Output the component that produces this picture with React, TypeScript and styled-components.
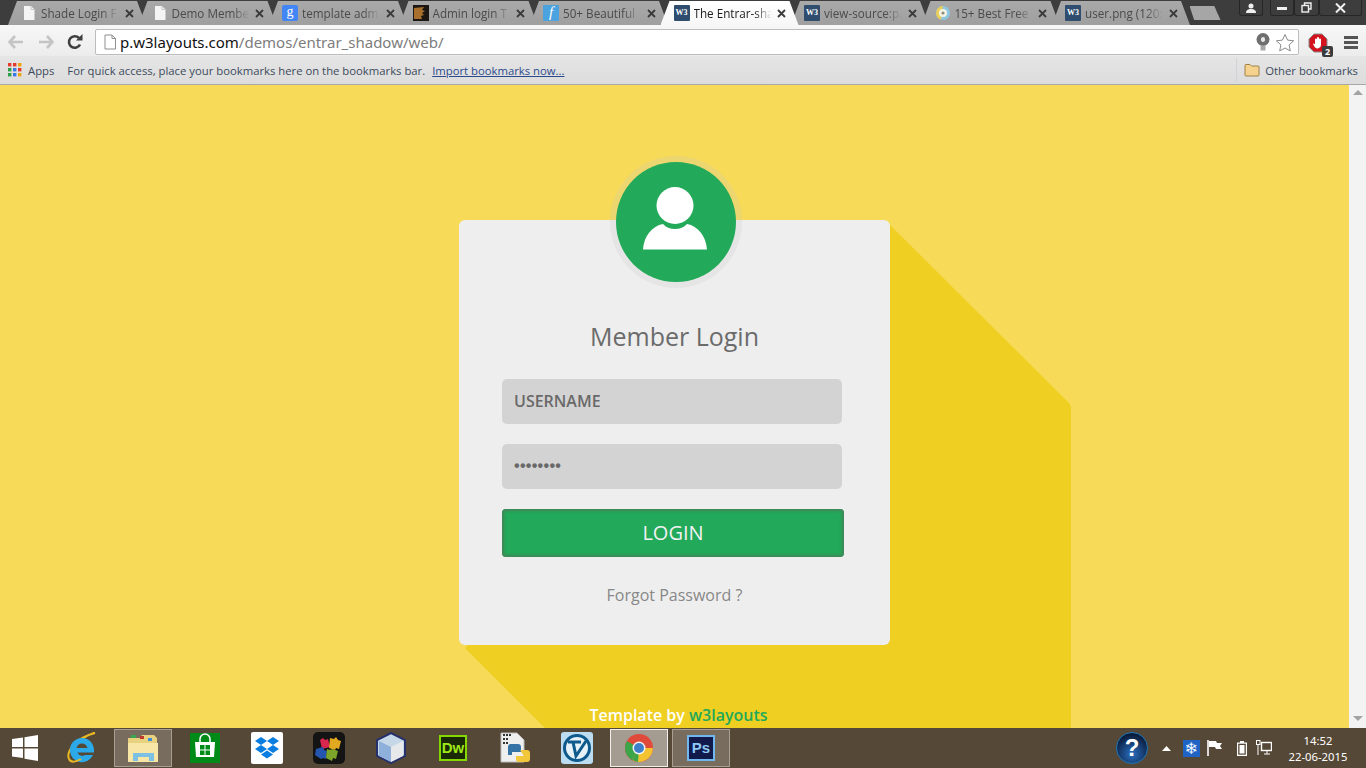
import React from "react";
import styled, { createGlobalStyle } from "styled-components";

const GlobalStyle = createGlobalStyle`
  html, body { margin: 0; padding: 0; overflow: hidden; }
  * { box-sizing: border-box; }
  body { font-family: "Open Sans", "Noto Sans", sans-serif; }
`;

const Screen = styled.div`
  width: 1366px;
  height: 768px;
  display: flex;
  flex-direction: column;
  overflow: hidden;
`;

/* chrome: tabs */
const TabStrip = styled.div`
  height: 25px;
  flex: none;
  background: #3d3d3d;
  display: flex;
  padding: 1px 4px 0 8px;
  position: relative;
`;

const Tab = styled.div<{ $active?: boolean }>`
  width: 138px;
  height: 24px;
  margin-right: -7.5px;
  flex: none;
  padding: 0 0 0 13px;
  display: flex;
  align-items: center;
  clip-path: polygon(9px 0, calc(100% - 9px) 0, 100% 100%, 0 100%);
  background: ${(p) => (p.$active ? "linear-gradient(#ffffff, #f7f7f7)" : "linear-gradient(#a9a9a9, #9f9f9f)")};
  position: relative;
  z-index: ${(p) => (p.$active ? 2 : 1)};
`;

const TabFavicon = styled.span`
  width: 16px;
  height: 16px;
  flex: none;
  display: flex;
  align-items: center;
  justify-content: center;
  overflow: hidden;
`;

const TabTitle = styled.span<{ $active?: boolean }>`
  width: 78px;
  margin-left: 4px;
  font-size: 11.7px;
  line-height: 16px;
  white-space: nowrap;
  color: ${(p) => (p.$active ? "#1c1c1c" : "#4a4a4a")};
  mask-image: linear-gradient(to right, #000 78%, transparent);
`;

const TabClose = styled.span`
  margin-left: 4px;
  width: 12px;
  display: flex;
  justify-content: center;
  color: #3a3a3a;
`;

const NewTab = styled.div`
  width: 31px;
  height: 14px;
  margin: 5px 0 0 7px;
  flex: none;
  background: #a6a6a6;
  clip-path: polygon(0 0, 80% 0, 100% 100%, 15% 100%);
`;

const WindowButtons = styled.div`
  margin-left: auto;
  display: flex;
  height: 16px;
  margin-top: -1px;
  color: #f0f0f0;
`;

const WinButton = styled.div<{ $w: number; $gap?: number }>`
  width: ${(p) => p.$w}px;
  margin-left: ${(p) => p.$gap ?? 0}px;
  height: 16px;
  border: 1px solid #262626;
  border-top: none;
  border-radius: 0 0 3px 3px;
  display: flex;
  align-items: center;
  justify-content: center;
`;

/* chrome: toolbar */
const Toolbar = styled.div`
  height: 31px;
  flex: none;
  background: linear-gradient(#f7f7f7, #ececec);
  display: flex;
  align-items: flex-start;
  padding-top: 4px;
`;

const NavIcon = styled.div<{ $w: number }>`
  width: ${(p) => p.$w}px;
  height: 26px;
  flex: none;
  display: flex;
  align-items: center;
  justify-content: center;
`;

const Omnibox = styled.div`
  width: 1204px;
  height: 26px;
  margin-left: 6px;
  flex: none;
  background: #fff;
  border: 1px solid #bdbdbd;
  border-radius: 2px;
  display: flex;
  align-items: center;
  padding: 0 3px 0 6px;
`;

const Url = styled.div`
  margin-left: 2px;
  font-family: "Noto Sans", sans-serif;
  font-size: 15px;
  color: #7d7d7d;
  white-space: nowrap;
  b { font-weight: 400; color: #111; }
`;

const OmniEnd = styled.div`
  margin-left: auto;
  display: flex;
  align-items: center;
  gap: 5px;
`;

const ExtBadge = styled.span`
  position: absolute;
  right: -5px;
  bottom: -4px;
  width: 11px;
  height: 11px;
  background: #3b3b3b;
  border-radius: 2px;
  color: #fff;
  font-size: 9px;
  font-weight: 700;
  line-height: 11px;
  text-align: center;
`;

const ExtButton = styled.div`
  width: 20px;
  height: 20px;
  margin: 4px 0 0 9px;
  position: relative;
  flex: none;
`;

/* chrome: bookmarks */
const BookmarkBar = styled.div`
  height: 29px;
  flex: none;
  background: linear-gradient(#e5e5e5, #dcdcdc);
  border-bottom: 1px solid #a8a8a8;
  display: flex;
  align-items: center;
  padding: 0 8px;
  font-size: 11.3px;
  color: #3c4a5c;
  white-space: nowrap;
`;

const BookmarkText = styled.span<{ $gap: number }>`
  margin-left: ${(p) => p.$gap}px;
`;

const ImportLink = styled.a`
  margin-left: 7px;
  color: #2b4a8c;
  text-decoration: underline;
`;

const OtherBookmarks = styled.div`
  margin-left: auto;
  height: 24px;
  padding-left: 7px;
  border-left: 1px solid #cfd3d8;
  display: flex;
  align-items: center;
  gap: 5px;
`;

/* page */
const Viewport = styled.div`
  flex: 1;
  display: flex;
  min-height: 0;
`;

const Page = styled.main`
  flex: 1;
  position: relative;
  background: #f7da58;
  overflow: hidden;
  padding-top: 77px;
  display: flex;
  flex-direction: column;
  align-items: center;
`;

const LongShadow = styled.svg`
  position: absolute;
  left: 0;
  top: 0;
`;

const Avatar = styled.div`
  width: 120px;
  height: 120px;
  flex: none;
  margin: 0 0 -62px 3px;
  padding: 0 3px 8px 0;
  border-radius: 50%;
  background: #22a95a;
  box-shadow: 0 0 0 6px rgba(200, 200, 200, 0.22);
  position: relative;
  z-index: 2;
  display: flex;
  align-items: center;
  justify-content: center;
`;

const Card = styled.form`
  width: 431px;
  height: 425px;
  flex: none;
  position: relative;
  background: #eeeeee;
  border-radius: 6px;
  padding: 99px 0 0 43px;
`;

const Title = styled.h2`
  margin: 0 0 26px -43px;
  font-size: 25px;
  line-height: 34px;
  font-weight: 400;
  color: #6b6b6b;
  text-align: center;
`;

const Field = styled.div`
  width: 340px;
  height: 45px;
  margin-bottom: 20px;
  padding: 0 0 2px 12px;
  background: #d3d3d3;
  border-radius: 5px;
  display: flex;
  align-items: center;
  font-size: 16px;
  font-weight: 600;
  color: #696969;
`;

const Dots = styled.span`
  font-size: 16px;
  font-family: "Liberation Sans", sans-serif;
  letter-spacing: 0.3px;
  font-weight: 700;
`;

const LoginButton = styled.button`
  display: block;
  width: 342px;
  height: 48px;
  padding: 0 0 2px;
  border: none;
  border-radius: 4px;
  background: #22a95a;
  box-shadow: inset 0 0 3px 2px rgba(70, 130, 90, 0.9);
  color: #f2f2f2;
  font-family: inherit;
  font-size: 20px;
  text-align: center;
`;

const Forgot = styled.a`
  display: block;
  margin: 26px 0 0 -43px;
  font-size: 16px;
  line-height: 24px;
  color: #888888;
  text-align: center;
`;

const Credit = styled.p`
  margin: 59px 0 0 8px;
  position: relative;
  font-size: 16px;
  font-weight: 600;
  line-height: 22px;
  color: #ffffff;
  white-space: nowrap;
  a { color: #22a95a; }
`;

const Scrollbar = styled.div`
  width: 17px;
  flex: none;
  background: #f3f3f3;
  display: flex;
  flex-direction: column;
  justify-content: space-between;
  align-items: center;
  padding: 5px 0 7px;
`;

const Arrow = styled.span<{ $down?: boolean }>`
  width: 0;
  height: 0;
  border-left: 5px solid transparent;
  border-right: 5px solid transparent;
  ${(p) => (p.$down ? "border-top: 5px solid #a3a3a3;" : "border-bottom: 5px solid #a3a3a3;")}
`;

/* taskbar */
const Taskbar = styled.footer`
  height: 40px;
  flex: none;
  background: #564836;
  display: flex;
  align-items: stretch;
`;

const StartButton = styled.div`
  width: 50px;
  flex: none;
  display: flex;
  align-items: center;
  justify-content: center;
`;

const TaskSlot = styled.div<{ $state?: "open" | "focus" }>`
  width: 58px;
  margin: 1px 2px;
  flex: none;
  display: flex;
  align-items: center;
  justify-content: center;
  border: 1px solid
    ${(p) => (p.$state === "focus" ? "#f2f0ec" : p.$state === "open" ? "#a79f93" : "transparent")};
  background: ${(p) => (p.$state === "focus" ? "#a49c90" : p.$state === "open" ? "#786c5e" : "transparent")};
`;

const Tray = styled.div`
  margin-left: auto;
  display: flex;
  align-items: center;
  color: #fff;
  padding-right: 18px;
`;

const TrayItem = styled.span<{ $gap: number }>`
  margin-left: ${(p) => p.$gap}px;
  display: flex;
`;

const Clock = styled.div`
  width: 60px;
  margin: 2px 0 0 16px;
  font-family: "Noto Sans", sans-serif;
  font-size: 11.3px;
  line-height: 16px;
  text-align: center;
  white-space: nowrap;
`;

/* little drawings */
const PageGlyph = ({ fill = "#f4f4f4", stroke = "none" }: { fill?: string; stroke?: string }) => (
  <svg width="16" height="16" viewBox="0 0 16 16">
    <path d="M3 1h7l3.500 3.500V15H3z" fill={fill} stroke={stroke} />
    <path d="M10 1v3.500h3.500" fill="none" stroke={stroke === "none" ? "#c8c8c8" : stroke} />
  </svg>
);

const W3Box = styled.span`
  width: 16px;
  height: 16px;
  background: #2f4d6e;
  border-radius: 1px;
  color: #fff;
  font-family: "Liberation Serif", serif;
  font-size: 8px;
  font-weight: 700;
  line-height: 16px;
  text-align: center;
`;

const W3Favicon = () => <W3Box>W3</W3Box>;

const GFavicon = styled.span`
  width: 16px;
  height: 16px;
  background: #4285f4;
  border-radius: 2px;
  color: #fff;
  font-family: "Liberation Serif", serif;
  font-size: 14px;
  line-height: 13px;
  text-align: center;
`;

const FFavicon = styled.span`
  width: 16px;
  height: 16px;
  background: #4aa3df;
  border-radius: 1px;
  color: #fff;
  font-family: "Liberation Serif", serif;
  font-style: italic;
  font-size: 15px;
  line-height: 15px;
  text-align: center;
`;

const DarkFavicon = () => (
  <svg width="16" height="16" viewBox="0 0 16 16">
    <rect width="16" height="16" fill="#1c1712" />
    <path d="M1 3l10-1-2 3 3 1-3 2 2 2-3 1 1 3-8 0z" fill="#a8702c" />
  </svg>
);

const SwirlFavicon = () => (
  <svg width="16" height="16" viewBox="0 0 16 16">
    <circle cx="8" cy="8" r="7" fill="#8cc6e0" />
    <path d="M8 1a7 7 0 0 0-7 7 7 7 0 0 0 5 6.700z" fill="#e9cf5a" />
    <circle cx="8" cy="8" r="4" fill="#f5f3e6" />
    <circle cx="8" cy="8" r="1.600" fill="#8c8c7a" />
  </svg>
);

const NavArrow = ({ dir, color }: { dir: "l" | "r"; color: string }) => (
  <svg width="16" height="14" viewBox="0 0 16 14" style={{ transform: dir === "r" ? "scaleX(-1)" : undefined }}>
    <path d="M7 1L1.500 7 7 13M2 7h13" fill="none" stroke={color} strokeWidth="2.600" />
  </svg>
);

const Reload = () => (
  <svg width="16" height="16" viewBox="0 0 16 16">
    <path d="M13 10.500A5.800 5.800 0 1 1 12 4" fill="none" stroke="#3f3f3f" strokeWidth="2.600" />
    <path d="M9 6.500h6.500V0z" fill="#3f3f3f" />
  </svg>
);

const Bulb = () => (
  <svg width="14" height="18" viewBox="0 0 14 18">
    <circle cx="7" cy="6.500" r="6.500" fill="#6f6f6f" />
    <rect x="5" y="4" width="4" height="5" rx="2" fill="#e8e8e8" />
    <rect x="4.500" y="12.500" width="5" height="5" fill="#a8a8a8" />
  </svg>
);

const Star = () => (
  <svg width="20" height="19" viewBox="0 0 20 19">
    <path d="M10 1.500l2.600 5.600 6 .7-4.500 4.100 1.200 6L10 15l-5.300 2.900 1.200-6L1.400 7.800l6-.7z" fill="#fff" stroke="#8a8a8a" />
  </svg>
);

const AdBlock = () => (
  <svg width="20" height="20" viewBox="0 0 20 20">
    <path d="M6 1h8l5 5v8l-5 5H6l-5-5V6z" fill="#d3121d" stroke="#8a8a8a" />
    <path d="M7 6.500a1 1 0 0 1 2 0V5a1 1 0 0 1 2 0v1.500a1 1 0 0 1 2 0V12a3.500 3.500 0 0 1-6.500 1.800L5 11c.5-1 1.400-.7 2 .2z" fill="#fff" />
  </svg>
);

const Menu = styled.div`
  width: 14px;
  height: 13px;
  margin: 7px 0 0 16px;
  flex: none;
  border-top: 3px solid #555;
  border-bottom: 3px solid #555;
  position: relative;
  &::after {
    content: "";
    position: absolute;
    left: 0;
    right: 0;
    top: 2px;
    height: 3px;
    background: #555;
  }
`;

const AppsGrid = () => (
  <svg width="14" height="14" viewBox="0 0 14 14">
    {["#e33b2e", "#e33b2e", "#f0a30a", "#2d9e48", "#3b78e7", "#e33b2e", "#2d9e48", "#3b78e7", "#f0a30a"].map((c, i) => (
      <rect key={i} x={(i % 3) * 5} y={Math.floor(i / 3) * 5} width="3.400" height="3.400" fill={c} />
    ))}
  </svg>
);

const Folder = () => (
  <svg width="16" height="14" viewBox="0 0 16 14">
    <path d="M1 2.500A1 1 0 0 1 2 1.500h4l1.500 1.500H14a1 1 0 0 1 1 1V12a1 1 0 0 1-1 1H2a1 1 0 0 1-1-1z" fill="#f5d28e" stroke="#a08048" />
  </svg>
);

const PersonIcon = () => (
  <svg width="64" height="63" viewBox="0 0 64 63">
    <circle cx="32" cy="18.500" r="18.500" fill="#fff" />
    <path d="M0 62.500C1 49 9 39 20 37c3 3.500 7 5 12 5s9-1.500 12-5c11 2 19 12 20 25.500z" fill="#fff" />
  </svg>
);

const WinLogo = () => (
  <svg width="26" height="26" viewBox="0 0 26 26">
    <path d="M0 4l11-1.500V12H0zM12.500 2.300L26 0v12H12.500zM0 13.500h11V23L0 21.500zM12.500 13.500H26V26l-13.500-2.200z" fill="#fff" />
  </svg>
);

const IeIcon = () => (
  <svg width="30" height="32" viewBox="0 0 30 32">
    <path d="M3 27C0 20 9 6 29 1c-6 1-13 6-17 10" fill="none" stroke="#e8b923" strokeWidth="2" />
    <path d="M16 6a12 12 0 0 0-12 13 12 12 0 0 0 23 4h-8a5 5 0 0 1-7.500-2.500H28C29 12 23 6 16 6zm-5.500 10c.5-2.500 3-4.500 5.500-4.500s5 2 5.500 4.500z" fill="#2ba9e8" />
    <path d="M3 27c2 4 7 3 12 0" fill="none" stroke="#e8b923" strokeWidth="2" />
  </svg>
);

const ExplorerIcon = () => (
  <svg width="32" height="30" viewBox="0 0 32 30">
    <path d="M1 5h12l2-3h12l3 3v24H1z" fill="#e9d27f" />
    <rect x="4" y="2" width="5" height="3" fill="#3aa650" />
    <rect x="13" y="3" width="4" height="3" fill="#c0392b" />
    <rect x="21" y="5" width="4" height="3" fill="#3b8fd8" />
    <path d="M1 10h30v19H1z" fill="#f7e6a6" />
    <path d="M6 28V20h21v8h-5v-4H11v4z" fill="#7cc0e4" />
  </svg>
);

const StoreIcon = () => (
  <svg width="30" height="30" viewBox="0 0 30 30">
    <rect width="30" height="30" fill="#008a17" />
    <path d="M5 9h20l-1 15H6z" fill="#fff" />
    <path d="M10 9V6a5 5 0 0 1 10 0v3" fill="none" stroke="#fff" strokeWidth="1.500" />
    <path d="M10 12h4.500v4.500H10zM15.500 12H20v4.500h-4.500zM10 17.500h4.500V22H10zM15.500 17.500H20V22h-4.500z" fill="#008a17" />
  </svg>
);

const DropboxIcon = () => (
  <svg width="32" height="32" viewBox="0 0 32 32">
    <rect width="32" height="32" rx="2" fill="#fff" />
    <path d="M10 5l6 4-6 4-6-4zM22 5l6 4-6 4-6-4zM10 13l6 4-6 4-6-4zM22 13l6 4-6 4-6-4zM10 22.500l6-4 6 4-6 4z" fill="#0a7de0" />
  </svg>
);

const PuzzleIcon = () => (
  <svg width="32" height="32" viewBox="0 0 32 32">
    <rect width="32" height="32" rx="5" fill="#141414" />
    <path d="M7 8l3-2 2 2 3-1 2 8-8 2z" fill="#d8264f" />
    <path d="M17 6l4 1 2-2 2 3 3 1-2 8-3-1-1 2-6-2z" fill="#e2a81f" />
    <path d="M3 17l7-2 1 3 3 1-1 8-3-1-2 1-6-4z" fill="#2456b0" />
    <path d="M14 17l3 1 2-1 6 2-2 8-3-1-1 3-6-3z" fill="#7ba428" />
  </svg>
);

const CubeIcon = () => (
  <svg width="30" height="32" viewBox="0 0 30 32">
    <path d="M15 1l14 7v16l-14 7-14-7V8z" fill="#c6d8e8" stroke="#26306a" strokeWidth="2" />
    <path d="M15 15v15l12-6V9z" fill="#e6e8ea" />
    <path d="M15 15v15L3 24V9z" fill="#90b0dc" />
  </svg>
);

const DwIcon = styled.span`
  width: 28px;
  height: 26px;
  background: #1a2a06;
  border: 2px solid #86d900;
  color: #9fe81a;
  font-family: "Liberation Sans", sans-serif;
  font-size: 15px;
  font-weight: 700;
  line-height: 22px;
  text-align: center;
`;

const PythonFileIcon = () => (
  <svg width="30" height="32" viewBox="0 0 30 32">
    <path d="M1 1h16l7 7v22H1z" fill="#efefef" stroke="#bbb" />
    <path d="M3 3l8 0M3 7h6M3 11h6" stroke="#333" strokeWidth="2" strokeDasharray="2 1" />
    <path d="M10 12h8a3 3 0 0 1 3 3v5h-9v3H8v-8a3 3 0 0 1 2-3z" fill="#3572a5" />
    <path d="M20 18h7a3 3 0 0 1 3 3v6a3 3 0 0 1-3 3h-8a3 3 0 0 1-3-3v-3h8z" fill="#f2c83a" />
  </svg>
);

const VIcon = () => (
  <svg width="32" height="32" viewBox="0 0 32 32">
    <rect width="32" height="32" rx="3" fill="#bcdcf2" />
    <circle cx="16" cy="16" r="12.500" fill="#e6f1f8" stroke="#0e5a8c" strokeWidth="3" />
    <path d="M7 10h13M12 10l3 14L25 9" fill="none" stroke="#0e5a8c" strokeWidth="3" />
  </svg>
);

const ChromeIcon = () => (
  <svg width="28" height="28" viewBox="0 0 28 28">
    <circle cx="14" cy="14" r="14" fill="#e04a3a" />
    <path d="M14 14L1.900 7a14 14 0 0 0 5.100 19z" fill="#3ba54a" />
    <path d="M7 26.100A14 14 0 0 0 27.900 14H14z" fill="#f4c430" />
    <path d="M14 14L7 26.100l6 1.900z" fill="#3ba54a" />
    <circle cx="14" cy="14" r="6.500" fill="#f2f2f2" />
    <circle cx="14" cy="14" r="5" fill="#3f80cc" />
  </svg>
);

const PsIcon = styled.span`
  width: 28px;
  height: 26px;
  background: #111a4a;
  border: 2px solid #72b8f0;
  color: #8fc8f5;
  font-family: "Liberation Sans", sans-serif;
  font-size: 15px;
  font-weight: 700;
  line-height: 22px;
  text-align: center;
`;

const HelpIcon = styled.span`
  width: 32px;
  height: 32px;
  border-radius: 50%;
  background: radial-gradient(circle at 50% 70%, #2a6fc0, #0a1c3c 75%);
  border: 1px solid #1b75b8;
  color: #fff;
  font-family: "Liberation Sans", sans-serif;
  font-size: 24px;
  font-weight: 700;
  line-height: 30px;
  text-align: center;
`;

const Snowflake = styled.span`
  width: 17px;
  height: 17px;
  background: #1f63c4;
  color: #f0f8ff;
  font-family: "DejaVu Sans", sans-serif;
  font-size: 16px;
  line-height: 17px;
  text-align: center;
`;

const FlagIcon = () => (
  <svg width="16" height="16" viewBox="0 0 16 16">
    <path d="M1 0v16" stroke="#fff" strokeWidth="1.600" />
    <path d="M2 1h7l1 2h5l-2 3 2 3h-6l-1-2H2z" fill="#fff" />
  </svg>
);

const BatteryIcon = () => (
  <svg width="10" height="15" viewBox="0 0 10 15">
    <path d="M3 0h4v1.500h3V15H0V1.500h3z" fill="#fff" />
    <rect x="1.200" y="2.700" width="7.600" height="11" fill="#564836" />
    <rect x="2.500" y="4" width="5" height="8.500" fill="#fff" />
  </svg>
);

const NetworkIcon = () => (
  <svg width="16" height="16" viewBox="0 0 16 16">
    <rect x="0.500" y="0.500" width="3.500" height="4" fill="none" stroke="#fff" />
    <path d="M2 5v10" stroke="#fff" />
    <rect x="5.500" y="2.500" width="10" height="8" fill="none" stroke="#fff" strokeWidth="1.400" />
    <path d="M8 14h6M11 11v3" stroke="#fff" />
  </svg>
);

const tabs: { title: string; icon: React.ReactNode; active?: boolean }[] = [
  { title: "Shade Login F", icon: <PageGlyph /> },
  { title: "Demo Membe", icon: <PageGlyph /> },
  { title: "template adm", icon: <GFavicon>g</GFavicon> },
  { title: "Admin login T", icon: <DarkFavicon /> },
  { title: "50+ Beautiful", icon: <FFavicon>f</FFavicon> },
  { title: "The Entrar-sha", icon: <W3Favicon />, active: true },
  { title: "view-source:p.", icon: <W3Favicon /> },
  { title: "15+ Best Free", icon: <SwirlFavicon /> },
  { title: "user.png (120:", icon: <W3Favicon /> },
];

export default function App() {
  return (
    <Screen>
      <GlobalStyle />
      <TabStrip>
        {tabs.map((t) => (
          <Tab key={t.title} $active={t.active}>
            <TabFavicon>{t.icon}</TabFavicon>
            <TabTitle $active={t.active}>{t.title}</TabTitle>
            <TabClose>
              <svg width="9" height="9" viewBox="0 0 9 9">
                <path d="M1 1l7 7M8 1L1 8" stroke="currentColor" strokeWidth="1.800" />
              </svg>
            </TabClose>
          </Tab>
        ))}
        <NewTab />
        <WindowButtons>
          <WinButton $w={24}>
            <svg width="10" height="10" viewBox="0 0 10 10">
              <circle cx="5" cy="3" r="2.500" fill="currentColor" />
              <path d="M0 10c0-3 2-4 5-4s5 1 5 4z" fill="currentColor" />
            </svg>
          </WinButton>
          <WinButton $w={24} $gap={7}>
            <svg width="10" height="4" viewBox="0 0 10 4">
              <rect width="10" height="3" y="1" fill="currentColor" />
            </svg>
          </WinButton>
          <WinButton $w={25}>
            <svg width="11" height="11" viewBox="0 0 11 11">
              <path d="M3.500 3V1h6.500v6H8" fill="none" stroke="currentColor" strokeWidth="1.400" />
              <rect x="1" y="3.500" width="6.500" height="6.500" fill="none" stroke="currentColor" strokeWidth="1.400" />
            </svg>
          </WinButton>
          <WinButton $w={43}>
            <svg width="11" height="10" viewBox="0 0 11 10">
              <path d="M1 0.500l9 9M10 0.500l-9 9" stroke="currentColor" strokeWidth="2" />
            </svg>
          </WinButton>
        </WindowButtons>
      </TabStrip>

      <Toolbar>
        <NavIcon $w={32}><NavArrow dir="l" color="#c4c4c4" /></NavIcon>
        <NavIcon $w={28}><NavArrow dir="r" color="#c4c4c4" /></NavIcon>
        <NavIcon $w={29}><Reload /></NavIcon>
        <Omnibox>
          <PageGlyph fill="#fff" stroke="#8f8f8f" />
          <Url><b>p.w3layouts.com</b>/demos/entrar_shadow/web/</Url>
          <OmniEnd>
            <Bulb />
            <Star />
          </OmniEnd>
        </Omnibox>
        <ExtButton>
          <AdBlock />
          <ExtBadge>2</ExtBadge>
        </ExtButton>
        <Menu />
      </Toolbar>

      <BookmarkBar>
        <AppsGrid />
        <BookmarkText $gap={6}>Apps</BookmarkText>
        <BookmarkText $gap={13}>For quick access, place your bookmarks here on the bookmarks bar.</BookmarkText>
        <ImportLink>Import bookmarks now...</ImportLink>
        <OtherBookmarks>
          <Folder />
          <span>Other bookmarks</span>
        </OtherBookmarks>
      </BookmarkBar>

      <Viewport>
        <Page>
          <LongShadow width="1349" height="643" viewBox="0 0 1349 643">
            <path d="M885 135L1069 318Q1071 320 1071 323V643H545L465 563z" fill="#efcf22" />
          </LongShadow>
          <Avatar>
            <PersonIcon />
          </Avatar>
          <Card>
            <Title>Member Login</Title>
            <Field>USERNAME</Field>
            <Field><Dots>••••••••</Dots></Field>
            <LoginButton type="button">LOGIN</LoginButton>
            <Forgot>Forgot Password ?</Forgot>
          </Card>
          <Credit>Template by <a>w3layouts</a></Credit>
        </Page>
        <Scrollbar>
          <Arrow />
          <Arrow $down />
        </Scrollbar>
      </Viewport>

      <Taskbar>
        <StartButton><WinLogo /></StartButton>
        <TaskSlot><IeIcon /></TaskSlot>
        <TaskSlot $state="open"><ExplorerIcon /></TaskSlot>
        <TaskSlot><StoreIcon /></TaskSlot>
        <TaskSlot><DropboxIcon /></TaskSlot>
        <TaskSlot><PuzzleIcon /></TaskSlot>
        <TaskSlot><CubeIcon /></TaskSlot>
        <TaskSlot><DwIcon>Dw</DwIcon></TaskSlot>
        <TaskSlot><PythonFileIcon /></TaskSlot>
        <TaskSlot><VIcon /></TaskSlot>
        <TaskSlot $state="focus"><ChromeIcon /></TaskSlot>
        <TaskSlot $state="open"><PsIcon>Ps</PsIcon></TaskSlot>
        <Tray>
          <HelpIcon>?</HelpIcon>
          <TrayItem $gap={14}>
            <svg width="9" height="5" viewBox="0 0 9 5"><path d="M4.500 0L9 5H0z" fill="#fff" /></svg>
          </TrayItem>
          <TrayItem $gap={12}><Snowflake>❄</Snowflake></TrayItem>
          <TrayItem $gap={7}><FlagIcon /></TrayItem>
          <TrayItem $gap={14}><BatteryIcon /></TrayItem>
          <TrayItem $gap={9}><NetworkIcon /></TrayItem>
          <Clock>14:52<br />22-06-2015</Clock>
        </Tray>
      </Taskbar>
    </Screen>
  );
}
